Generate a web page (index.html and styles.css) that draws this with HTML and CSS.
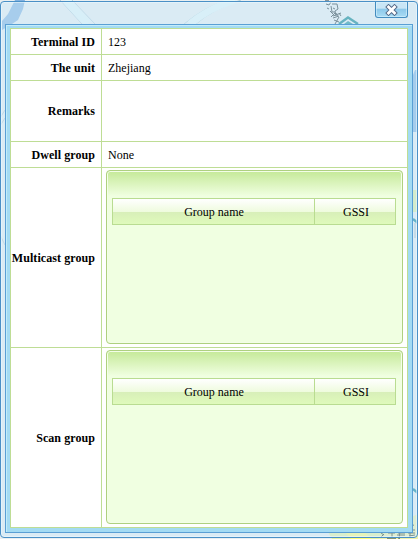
FILE: index.html
```html
<!DOCTYPE html>
<html lang="en">
<head>
<meta charset="utf-8">
<title>Terminal details</title>
<link rel="stylesheet" href="styles.css">
</head>
<body>
<svg class="map" width="418" height="539" viewBox="0 0 418 539" fill="none">
  <path d="M15 0H25L23 9L18 20L12 24L2 30V21L8 14Z" fill="#82b2e0"/>
  <path d="M60 0L82 24M72 0L95 24" stroke="#b5d0dc"/>
  <path d="M66 0L88 24" stroke="#e3f6f8" stroke-width="8"/>
  <path d="M228 0Q206 6 184 24M241 0Q213 9 196 24" stroke="#b3d2db"/>
  <path d="M235 0Q209 8 190 24" stroke="#e5f7f8" stroke-width="7"/>
  <path d="M325 1h4m-3 3l3 1m-2 3l2 1m3-5h5l1 5-3 2m-4-5l1 6 3 0m-2-4l2 1m-4-7l-2 3m1 6l5 5m-4 1l4-4m0-2l1 5m-3 0l8-3m-5 0l2 4m1-4l2 3m-8 2l6-2m-5 4l5 2m0-5l-4 7" stroke="#28393e"/>
  <path d="M339 24L348 17.500L358 24" stroke="#007f88" stroke-width="2.4"/><path d="M344 24l4-3 5 3z" fill="#168e99"/>
  <path d="M415 70h3v62h-5V75z" fill="#7fb1e0"/>
  <path d="M413 190h5v22h-5z" fill="#daf0a0"/>
  <path d="M413 219l5 4" stroke="#007f99" stroke-width="2.4"/>
  <path d="M415 223v15" stroke="#9aafb8"/>
  <path d="M413 489l5 4" stroke="#007f99" stroke-width="2.4"/>
  <path d="M0 118l5-8M0 126l5-8M0 235l5 10" stroke="#b5cbd6"/>
  <path d="M328 532h58v7H332z" fill="#e5f5a0"/><path d="M345 532h20l6 7H351z" fill="#ffff78"/>
  <path d="M400 522l18-8v25H378z" fill="#eff3ac"/>
  <path d="M381 533l3 2m-3 2l3-3m4-1h7m-3 0v5m-5 0h9m2-5h7m-5-2l-1 8m-2-4h8m3-8l6-2m-4 2v10m-3-7h8m-7 3h7m-6 3l6-1" stroke="#28382b"/>
</svg>
<main class="window">
  <header class="titlebar">
    <button class="close" aria-label="Close"><svg width="13" height="12" viewBox="0 0 13 12"><path d="M3.500 3L9.500 9M9.500 3L3.500 9" stroke="#536887" stroke-width="4.6" stroke-linecap="square"/><path d="M3.500 3L9.500 9M9.500 3L3.500 9" stroke="#fff" stroke-width="2.7" stroke-linecap="square"/></svg></button>
  </header>
  <section class="frame">
    <table class="details">
      <tr class="short"><th>Terminal ID</th><td>123</td></tr>
      <tr class="short"><th>The unit</th><td>Zhejiang</td></tr>
      <tr class="remarks"><th>Remarks</th><td></td></tr>
      <tr class="short"><th>Dwell group</th><td>None</td></tr>
      <tr class="tall"><th>Multicast group</th><td class="holder"><div class="panel"><div class="grid"><span>Group name</span><span>GSSI</span></div></div></td></tr>
      <tr class="tall"><th>Scan group</th><td class="holder"><div class="panel"><div class="grid"><span>Group name</span><span>GSSI</span></div></div></td></tr>
    </table>
  </section>
</main>
</body>
</html>
```
FILE: styles.css
```css
* { box-sizing: border-box; }
body {
  margin: 0;
  padding-top: 1px;
  width: 418px;
  height: 539px;
  overflow: hidden;
  background: #e9eff1;
  font: 12px/14px "Liberation Serif", serif;
  color: #000;
}
.map { position: absolute; left: 0; top: 0; }
.window {
  position: relative;
  height: 537px;
  padding: 0 4px 4px;
  border: 1px solid #4a90c6;
  border-radius: 4px;
  background: rgba(204, 231, 247, .5);
  box-shadow: inset 0 0 0 1px rgba(235, 248, 255, .6);
}
.titlebar { height: 22px; display: flex; justify-content: flex-end; align-items: flex-start; padding-right: 5px; }
.close {
  display: flex;
  align-items: center;
  justify-content: center;
  width: 33px;
  height: 16px;
  padding: 0;
  border: 1px solid #438cbf;
  border-top: 0;
  border-radius: 0 0 3px 3px;
  background: linear-gradient(#c9e6f6 0 40%, #8ec9ea 50%, #a9dcf4);
  box-shadow: inset 0 0 0 1px rgba(225, 247, 255, .5);
}
.frame {
  height: 509px;
  padding: 3px 4px 4px;
  border: 1px solid #5a9fd4;
  background: #a3dbf3;
  box-shadow: inset 1px 1px #c3ecfa;
}
.details { width: 398px; height: 500px; border-collapse: collapse; table-layout: fixed; background: #fff; }
.details th, .details td { border: 1px solid #bedd95; padding: 0 6px; }
.details th { width: 91px; padding-left: 0; text-align: right; white-space: nowrap; letter-spacing: .07px; }
.short { height: 26px; }
.remarks { height: 61px; }
.tall { height: 180px; }
.details .holder { padding: 2px 4px 3px; }
.panel {
  width: 297px;
  height: 174px;
  padding: 27px 6px 0 5px;
  border: 1px solid #aed080;
  border-radius: 4px;
  background: linear-gradient(#c5e998, #f0ffe1 25px);
  box-shadow: inset 0 0 0 1px #f3fee8;
}
.grid {
  display: grid;
  grid-template-columns: 203px 1fr;
  width: 284px;
  height: 27px;
  border: 1px solid #b9dc91;
  background: linear-gradient(#fff, #eefbdd 52%, #d8efb9 53%, #dffabb);
}
.grid span { display: flex; align-items: center; justify-content: center; }
.grid span:first-child { width: 202px; border-right: 1px solid #b9dc91; padding-left: 1px; }
.grid span:last-child { padding-left: 1px; }
```
